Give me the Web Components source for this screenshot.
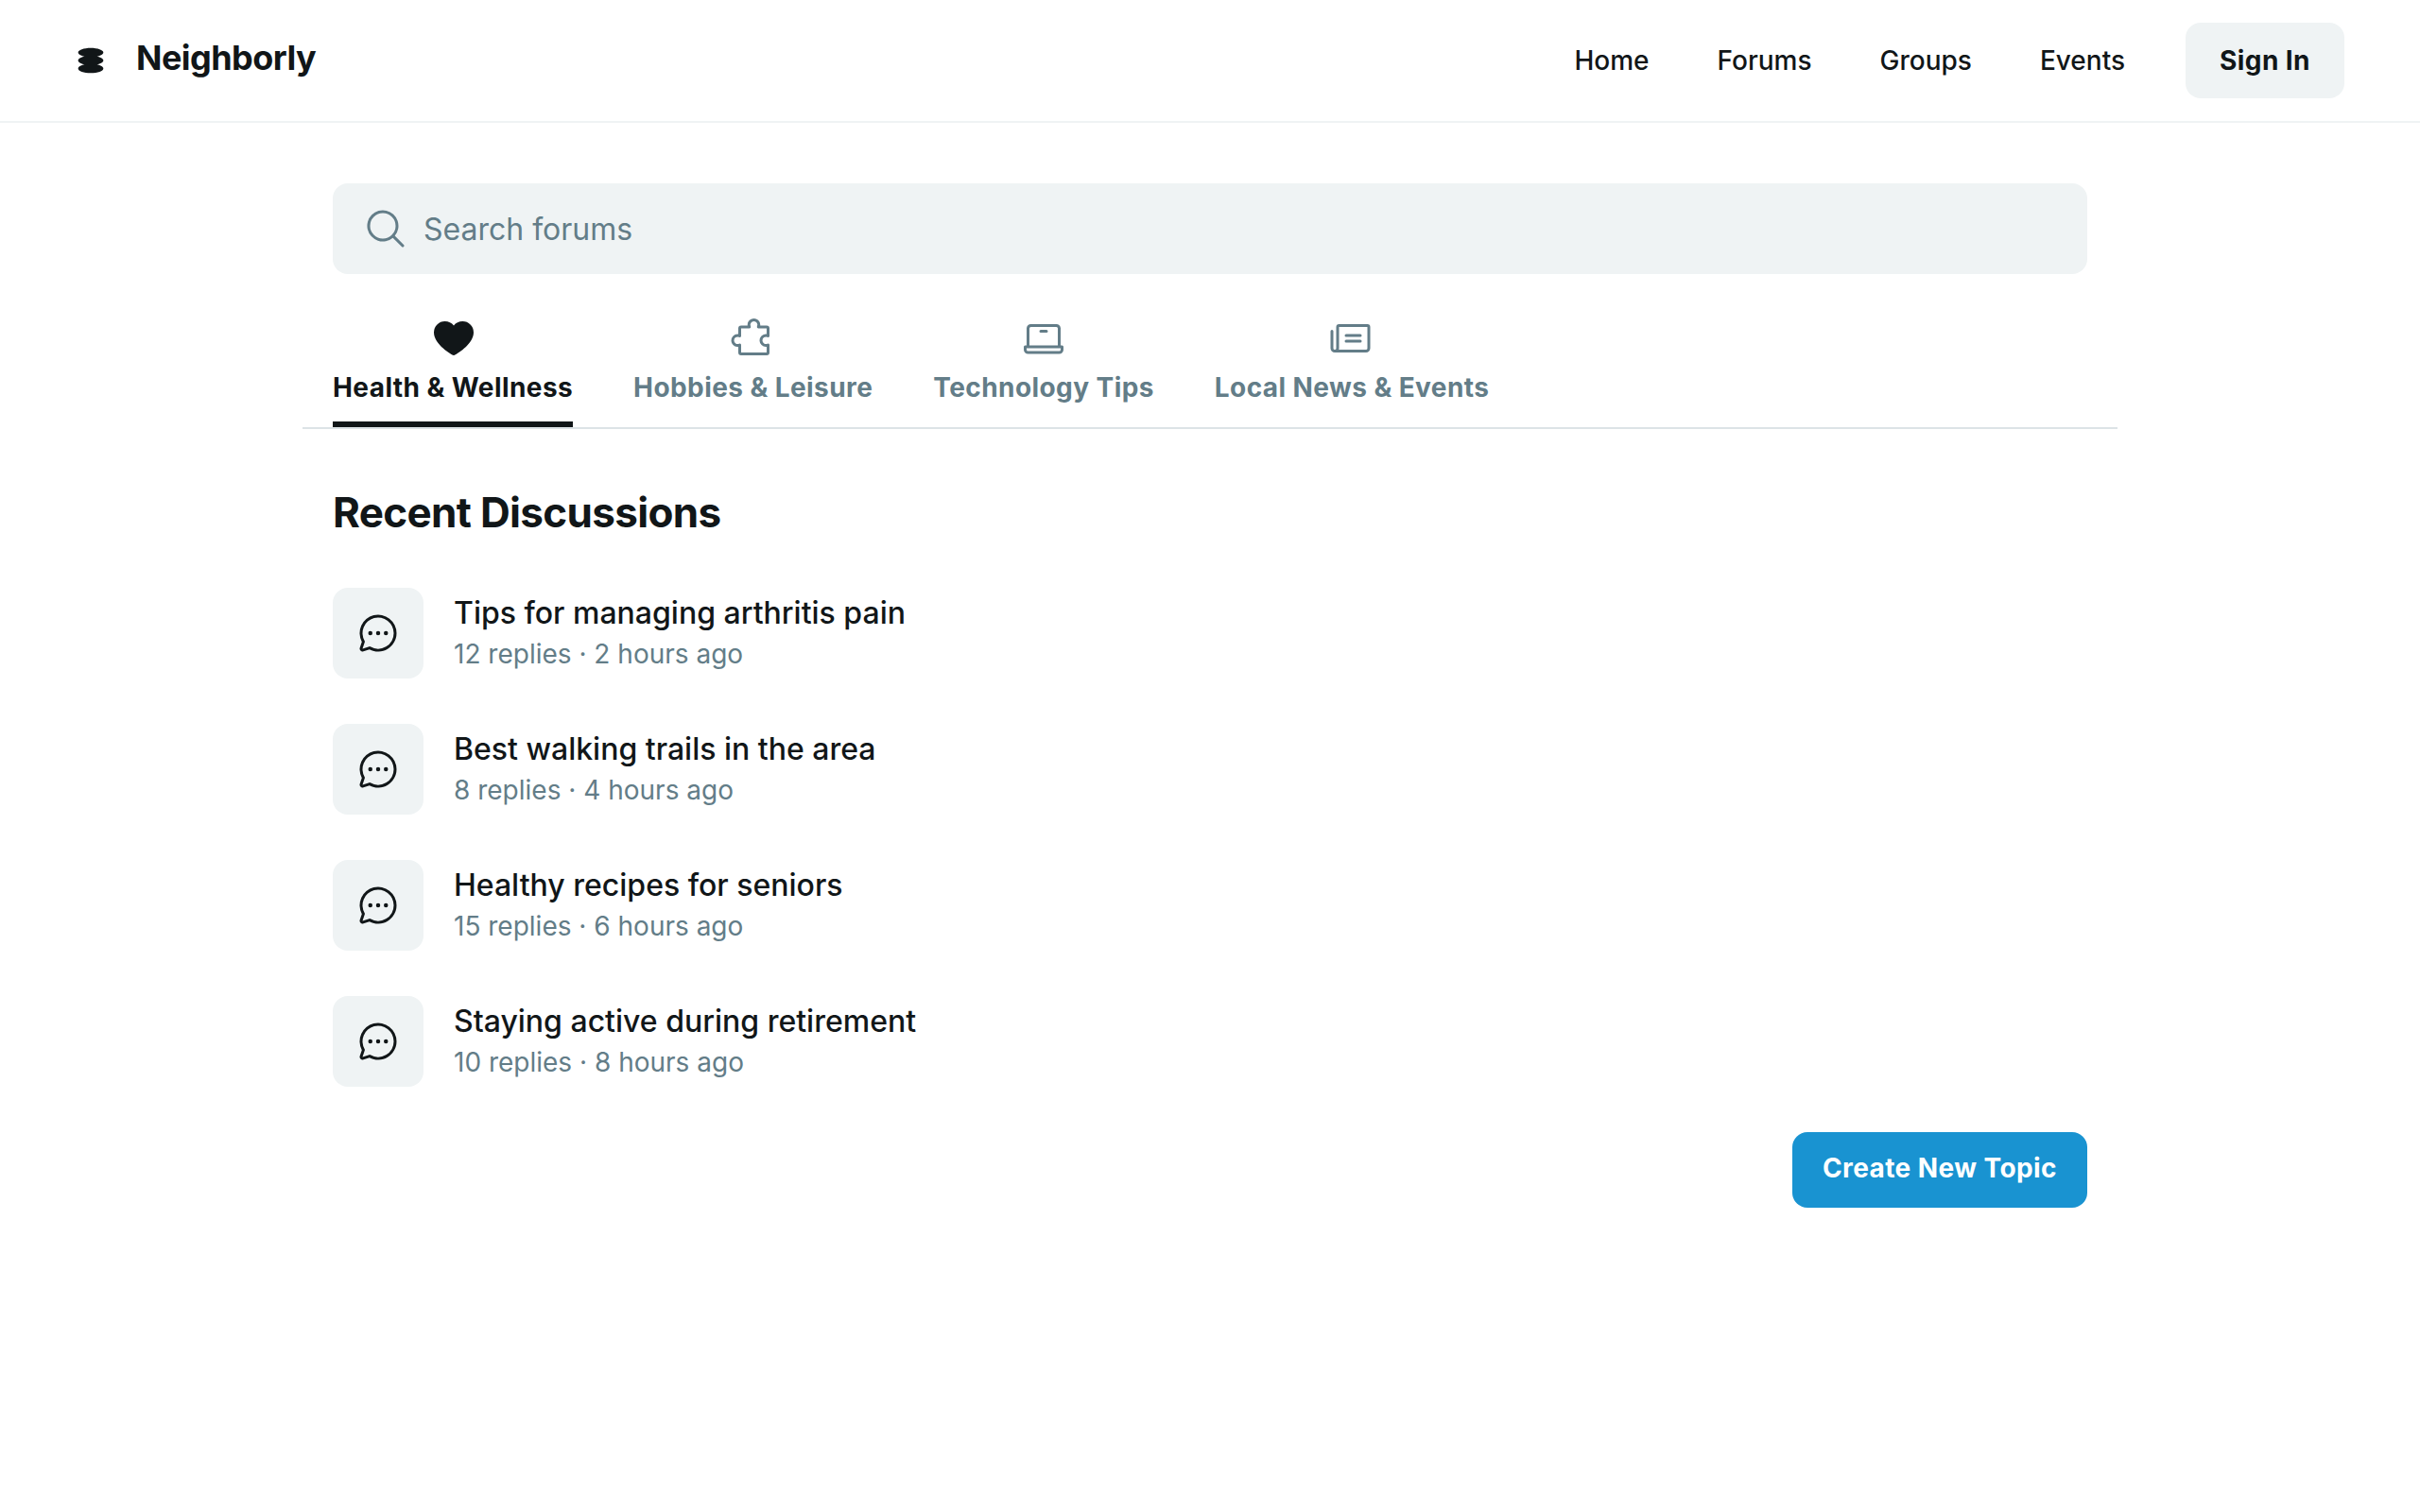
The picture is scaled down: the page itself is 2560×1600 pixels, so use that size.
<!DOCTYPE html>
<html lang="en">
<head>
<meta charset="utf-8">
<title>Neighborly Forums</title>
<style>
  :root { --ink: #111618; --muted: #637d88; --surface: #eff3f4; --line: #dce3e6; --accent: #1993d1; }
  body { margin: 0; background: #fff; color: var(--ink); font-family: Inter, "Noto Sans", sans-serif; font-size: 28px; line-height: 42px; }
</style>
</head>
<body>
<forum-page></forum-page>
<script>
const ICONS = {
  logo: ['0 0 48 48', 'M44 11.2727C44 14.0109 39.8386 16.3957 33.69 17.6364C39.8386 18.877 44 21.2618 44 24C44 26.7382 39.8386 29.123 33.69 30.3636C39.8386 31.6043 44 33.9891 44 36.7273C44 40.7439 35.0457 44 24 44C12.9543 44 4 40.7439 4 36.7273C4 33.9891 8.16144 31.6043 14.31 30.3636C8.16144 29.123 4 26.7382 4 24C4 21.2618 8.16144 18.877 14.31 17.6364C8.16144 16.3957 4 14.0109 4 11.2727C4 7.25611 12.9543 4 24 4C35.0457 4 44 7.25611 44 11.2727Z'],
  search: ['0 0 256 256', 'M229.66,218.34l-50.07-50.06a88.11,88.11,0,1,0-11.31,11.31l50.06,50.07a8,8,0,0,0,11.32-11.32ZM40,112a72,72,0,1,1,72,72A72.08,72.08,0,0,1,40,112Z'],
  heart: ['0 0 256 256', 'M240,94c0,70-103.79,126.66-108.21,129a8,8,0,0,1-7.58,0C119.79,220.66,16,164,16,94A62.07,62.07,0,0,1,78,32c20.65,0,38.73,8.88,50,23.89C139.27,40.88,157.35,32,178,32A62.07,62.07,0,0,1,240,94Z'],
  puzzle: ['0 0 256 256', 'M220.27,158.54a8,8,0,0,0-7.7-.46,20,20,0,1,1,0-36.16A8,8,0,0,0,224,114.69V72a16,16,0,0,0-16-16H171.78a35.36,35.36,0,0,0,.22-4,36.11,36.11,0,0,0-11.36-26.24,36,36,0,0,0-60.55,23.62,36.56,36.56,0,0,0,.14,6.62H64A16,16,0,0,0,48,72v32.22a35.36,35.36,0,0,0-4-.22,36.12,36.12,0,0,0-26.24,11.36,35.7,35.7,0,0,0-9.69,27,36.08,36.08,0,0,0,33.31,33.6,35.68,35.68,0,0,0,6.62-.14V208a16,16,0,0,0,16,16H208a16,16,0,0,0,16-16V165.31A8,8,0,0,0,220.27,158.54ZM208,208H64V165.31a8,8,0,0,0-11.43-7.23,20,20,0,1,1,0-36.16A8,8,0,0,0,64,114.69V72h46.69a8,8,0,0,0,7.23-11.43,20,20,0,1,1,36.16,0A8,8,0,0,0,161.31,72H208v32.23a35.68,35.68,0,0,0-6.62-.14A36,36,0,0,0,204,176a35.36,35.36,0,0,0,4-.22Z'],
  laptop: ['0 0 256 256', 'M232,168h-8V72a24,24,0,0,0-24-24H56A24,24,0,0,0,32,72v96H24a8,8,0,0,0-8,8v16a24,24,0,0,0,24,24H216a24,24,0,0,0,24-24V176A8,8,0,0,0,232,168ZM48,72a8,8,0,0,1,8-8H200a8,8,0,0,1,8,8v96H48ZM224,192a8,8,0,0,1-8,8H40a8,8,0,0,1-8-8v-8H224ZM152,88a8,8,0,0,1-8,8H112a8,8,0,0,1,0-16h32A8,8,0,0,1,152,88Z'],
  news: ['0 0 256 256', 'M88,112a8,8,0,0,1,8-8h80a8,8,0,0,1,0,16H96A8,8,0,0,1,88,112Zm8,40h80a8,8,0,0,0,0-16H96a8,8,0,0,0,0,16ZM232,64V184a24,24,0,0,1-24,24H32A24,24,0,0,1,8,184.11V88a8,8,0,0,1,16,0v96a8,8,0,0,0,16,0V64A16,16,0,0,1,56,48H216A16,16,0,0,1,232,64Zm-16,0H56V184a23.84,23.84,0,0,1-1.37,8H208a8,8,0,0,0,8-8Z'],
  chat: ['0 0 256 256', 'M140,128a12,12,0,1,1-12-12A12,12,0,0,1,140,128ZM84,116a12,12,0,1,0,12,12A12,12,0,0,0,84,116Zm88,0a12,12,0,1,0,12,12A12,12,0,0,0,172,116Zm60,12A104,104,0,0,1,79.12,219.82L45.07,231.17a16,16,0,0,1-20.24-20.24l11.35-34.05A104,104,0,1,1,232,128Zm-16,0A88,88,0,1,0,51.81,172.06a8,8,0,0,1,.66,6.54L40,216,77.4,203.53a7.85,7.85,0,0,1,2.53-.42,8,8,0,0,1,4,1.08A88,88,0,0,0,216,128Z']
};

const define = (name, render) => customElements.define(name, class extends HTMLElement {
  constructor() { super(); this.attachShadow({ mode: 'open' }); }
  connectedCallback() { this.shadowRoot.innerHTML = render(this); }
});

define('ui-icon', el => {
  const [box, d] = ICONS[el.getAttribute('name')];
  return `<style>:host{display:block;flex:none;width:48px;height:48px}svg{display:block;width:100%;height:100%}</style>
  <svg viewBox="${box}" fill="currentColor" aria-hidden="true"><path d="${d}"/></svg>`;
});

define('ui-button', () => `<style>
  :host{display:block;flex:none}
  button{all:unset;box-sizing:border-box;display:flex;align-items:center;justify-content:center;height:80px;min-width:168px;padding:0 32px;border-radius:16px;background:var(--surface);color:var(--ink);font-weight:700;letter-spacing:.015em;white-space:nowrap;cursor:pointer}
  :host([primary]) button{background:var(--accent);color:#fff;padding-bottom:4px}
  </style><button><slot></slot></button>`);

define('nav-link', () => `<style>:host{display:block}a{color:var(--ink);font-weight:500;text-decoration:none}</style><a><slot></slot></a>`);

define('site-header', () => `<style>
  :host{display:flex;align-items:center;justify-content:space-between;padding:24px 80px;border-bottom:2px solid var(--surface)}
  .brand{display:flex;align-items:center;gap:32px}
  .brand ui-icon{width:32px;height:32px}
  h2{margin:0;padding-bottom:5px;font-size:36px;line-height:45px;font-weight:700;letter-spacing:-.015em}
  .right{display:flex;align-items:center;gap:64px}
  nav{display:flex;align-items:center;gap:72px}
  </style>
  <div class="brand"><ui-icon name="logo"></ui-icon><h2>Neighborly</h2></div>
  <div class="right">
    <nav><nav-link>Home</nav-link><nav-link>Forums</nav-link><nav-link>Groups</nav-link><nav-link>Events</nav-link></nav>
    <ui-button>Sign In</ui-button>
  </div>`);

define('search-box', () => `<style>
  :host{display:flex;align-items:center;gap:16px;height:96px;margin:24px 32px;padding:0 32px;box-sizing:border-box;border-radius:16px;background:var(--surface);color:var(--muted);font-size:32px;line-height:48px}
  span{padding-top:2px}
  </style><ui-icon name="search"></ui-icon><span><slot></slot></span>`);

define('forum-tab', el => `<style>
  :host{display:flex;flex-direction:column;align-items:center;gap:7px;padding:20px 0 15px;border-bottom:6px solid transparent;color:var(--muted);font-weight:700;letter-spacing:.015em;white-space:nowrap}
  :host([active]){color:var(--ink);border-bottom-color:var(--ink)}
  ui-icon[name=heart]{margin-left:2px}
  ui-icon[name=puzzle]{margin-right:1px}
  </style><ui-icon name="${el.getAttribute('icon')}"></ui-icon><span><slot></slot></span>`);

define('tab-bar', () => `<style>:host{display:flex;gap:64px;padding:0 32px;margin-bottom:24px;border-bottom:2px solid var(--line)}</style><slot></slot>`);

define('discussion-row', el => `<style>
  :host{display:flex;align-items:center;gap:32px;height:144px;padding:0 32px;box-sizing:border-box}
  .tile{display:flex;align-items:center;justify-content:center;flex:none;width:96px;height:96px;border-radius:16px;background:var(--surface)}
  .text{display:flex;flex-direction:column}
  .title{font-size:32px;line-height:47px;font-weight:500}
  .meta{color:var(--muted);line-height:40px;padding-bottom:3px}
  </style>
  <div class="tile"><ui-icon name="chat"></ui-icon></div>
  <div class="text"><span class="title"><slot></slot></span><span class="meta">${el.getAttribute('meta')}</span></div>`);

define('forum-page', () => `<style>
  :host{display:block;min-height:1600px}
  main{width:1920px;margin:0 auto;padding:40px 0}
  h2{margin:0;padding:37px 32px 28px;font-size:44px;line-height:55px;font-weight:700;letter-spacing:-.015em}
  .actions{display:flex;justify-content:flex-end;padding:24px 32px}
  </style>
  <site-header></site-header>
  <main>
    <search-box>Search forums</search-box>
    <tab-bar>
      <forum-tab icon="heart" active>Health &amp; Wellness</forum-tab>
      <forum-tab icon="puzzle">Hobbies &amp; Leisure</forum-tab>
      <forum-tab icon="laptop">Technology Tips</forum-tab>
      <forum-tab icon="news">Local News &amp; Events</forum-tab>
    </tab-bar>
    <h2>Recent Discussions</h2>
    <discussion-row meta="12 replies · 2 hours ago">Tips for managing arthritis pain</discussion-row>
    <discussion-row meta="8 replies · 4 hours ago">Best walking trails in the area</discussion-row>
    <discussion-row meta="15 replies · 6 hours ago">Healthy recipes for seniors</discussion-row>
    <discussion-row meta="10 replies · 8 hours ago">Staying active during retirement</discussion-row>
    <div class="actions"><ui-button primary>Create New Topic</ui-button></div>
  </main>`);
</script>
</body>
</html>
